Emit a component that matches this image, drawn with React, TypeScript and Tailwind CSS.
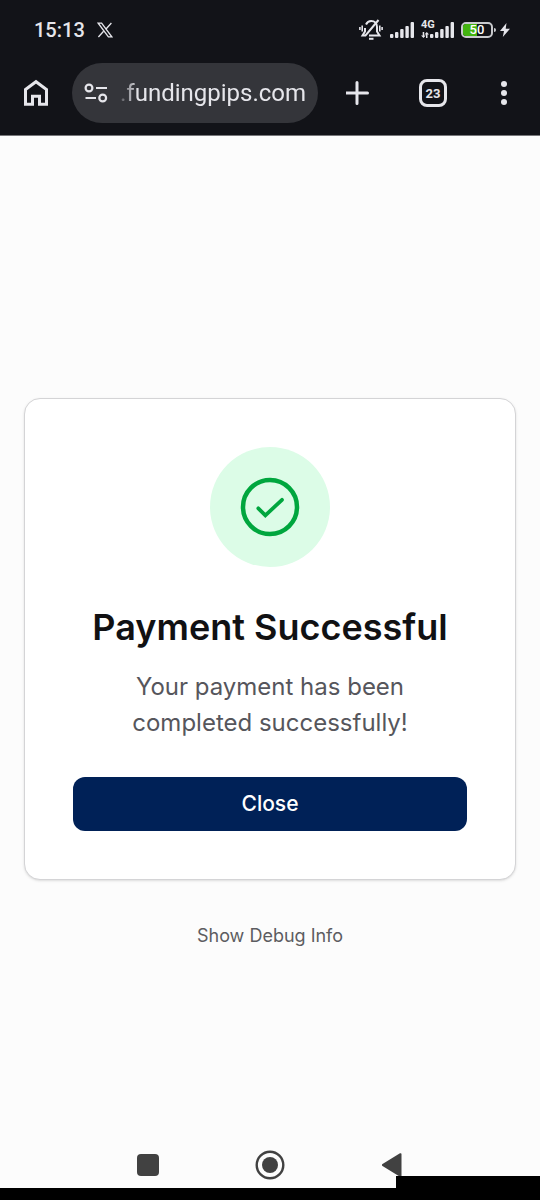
import React from 'react';

function StatusBar() {
  return (
    <div className="flex h-[59px] items-center justify-between pl-[34px] pr-[30px]">
      <div className="flex items-center gap-3">
        <span className="font-[Roboto,sans-serif] text-xl font-medium">15:13</span>
        <svg className="h-4 w-4" viewBox="0 0 16 16" fill="none" stroke="currentColor" strokeWidth="1.3">
          <path d="M1.2 1.2h3.4l10.2 13.6h-3.4z" />
          <path d="M14.4 1 8.8 7.2M6.6 9.2 1.4 15" />
        </svg>
      </div>

      <div className="flex items-center gap-[7px]">
        {/* Muted bell */}
        <svg className="h-6 w-6" viewBox="0 0 24 24" fill="none" stroke="currentColor" strokeWidth="2">
          <path d="M7 6.5C8.200 4 10 3 12.200 3c3.600 0 5.800 2.700 5.800 6v4.500l2.500 4H10" />
          <path d="M6 10v3.500L3.500 17.500h3L19.500 2" />
          <path d="M10 20.800h4.500" strokeWidth="2" />
          <path d="M3.200 7.500v6M.9 9v3M20.800 7.500v6M23.100 9v3" strokeWidth="1.6" />
        </svg>
        <svg className="h-4 w-6" viewBox="0 0 24 16" fill="currentColor">
          <rect x="0" y="12" width="3.400" height="4" rx="1" />
          <rect x="5" y="10" width="3.400" height="6" rx="1" />
          <rect x="10.200" y="7" width="3.400" height="9" rx="1" />
          <rect x="15.400" y="4" width="3.400" height="12" rx="1" />
          <rect x="20.600" y="0" width="3.400" height="16" rx="1" />
        </svg>
        <div className="relative h-5 w-[33px]">
          <span className="absolute left-0 top-0 font-[Roboto,sans-serif] text-[11px] font-bold leading-[10px]">4G</span>
          <svg className="h-5 w-full" viewBox="0 0 33 20" fill="currentColor">
            <path d="M1.700 12h1.500v3.500h1.500L2.500 18 0 15.500h1.700zM5 18h1.500v-3.500H8L5.800 12 3.500 14.500H5z" />
            <rect x="9" y="14" width="3.400" height="4" rx="1" />
            <rect x="14" y="12" width="3.400" height="6" rx="1" />
            <rect x="19.200" y="9" width="3.400" height="9" rx="1" />
            <rect x="24.400" y="6" width="3.400" height="12" rx="1" />
            <rect x="29.600" y="2" width="3.400" height="16" rx="1" />
          </svg>
        </div>
        <div className="flex items-center gap-1">
          <div className="flex items-center gap-px">
            <div className="relative flex h-4 w-8 items-center justify-center rounded-[5px] border-2 border-[#c9cacd]">
              <div className="absolute inset-y-0 left-0 w-1/2 rounded-l-[3px] bg-[#43b40f]" />
              <span className="relative font-[Roboto,sans-serif] text-[13px] font-medium leading-3 text-white">50</span>
            </div>
            <div className="h-1 w-0.5 rounded-r bg-[#c9cacd]" />
          </div>
          <svg className="h-4 w-[10px]" viewBox="0 0 10 16" fill="currentColor">
            <path d="M6.500 1 0 9h4L2.800 15 10 6.800H5.700z" />
          </svg>
        </div>
      </div>
    </div>
  );
}

function BrowserBar() {
  return (
    <div className="flex h-[68px] items-center pl-5 pr-6">
      <button type="button" aria-label="Home" className="flex h-8 w-8 shrink-0 items-center justify-center">
        <svg className="h-7 w-7" viewBox="0 0 28 28" fill="none" stroke="currentColor" strokeWidth="3">
          <path d="M3.500 10.500 14 2.700l10.500 7.800v14.800h-7v-8h-7v8h-7z" />
        </svg>
      </button>

      <div className="ml-5 flex h-[60px] min-w-0 flex-1 items-center rounded-full bg-[#34353a] px-3">
        <svg className="h-6 w-6 shrink-0" viewBox="0 0 24 24" fill="none" stroke="currentColor" strokeWidth="2.200">
          <circle cx="5" cy="7" r="3.400" />
          <path d="M12 7h11M1.500 17H12" />
          <circle cx="18.700" cy="17" r="3.400" />
        </svg>
        <input
          type="text"
          aria-label="Address"
          readOnly
          value=".fundingpips.com"
          className="ml-3 h-10 w-full min-w-0 bg-transparent font-[Roboto,sans-serif] text-2xl outline-none [mask-image:linear-gradient(to_right,rgba(0,0,0,0.2),black_18px)]"
        />
      </div>

      <div className="ml-6 flex w-[174px] shrink-0 items-center justify-between">
        <button type="button" aria-label="New tab" className="flex h-8 w-8 items-center justify-center">
          <svg className="h-6 w-6" viewBox="0 0 24 24" fill="none" stroke="currentColor" strokeWidth="3" strokeLinecap="round">
            <path d="M11 1.500v21M.5 12h21" />
          </svg>
        </button>
        <button
          type="button"
          aria-label="Open tabs"
          className="flex h-7 w-7 items-center justify-center rounded-lg border-3 border-current font-[Roboto,sans-serif] text-[13px] font-bold leading-none"
        >
          23
        </button>
        <button type="button" aria-label="Menu" className="flex h-8 w-6 items-center justify-center">
          <svg className="h-6 w-6" viewBox="0 0 24 24" fill="currentColor">
            <circle cx="12" cy="3" r="3" />
            <circle cx="12" cy="12" r="3" />
            <circle cx="12" cy="21" r="3" />
          </svg>
        </button>
      </div>
    </div>
  );
}

function PaymentCard() {
  return (
    <section className="rounded-2xl border border-[#d4d4d6] bg-white p-12 text-center shadow">
      <div className="mx-auto flex h-30 w-30 items-center justify-center rounded-full bg-[#dcfce7]">
        <svg className="h-18 w-18" viewBox="0 0 24 24" fill="none" stroke="#00a63e" strokeWidth="1.500" strokeLinecap="round" strokeLinejoin="round">
          <circle cx="12" cy="12" r="9" />
          <path d="m8.100 12.450 2.350 2.350L16 9.600" strokeWidth="1.250" strokeLinejoin="miter" />
        </svg>
      </div>
      <h1 className="mt-9 text-4xl font-semibold leading-[48px] text-[#111113]">Payment Successful</h1>
      <p className="mx-auto mt-[18px] max-w-[320px] text-2xl leading-9 text-[#56565c]">
        Your payment has been completed successfully!
      </p>
      <button type="button" className="mt-9 h-[54px] w-full rounded-xl bg-[#002157] text-[21px] font-medium text-white">
        Close
      </button>
    </section>
  );
}

function SystemNav() {
  return (
    <nav>
      <div className="flex h-[47px] items-center justify-center gap-[90px] text-[#414141]">
        <button type="button" aria-label="Recent apps" className="flex h-8 w-8 items-center justify-center">
          <svg className="h-[22px] w-[22px]" viewBox="0 0 22 22" fill="currentColor">
            <rect width="22" height="22" rx="4" />
          </svg>
        </button>
        <button type="button" aria-label="Home screen" className="flex h-8 w-8 items-center justify-center">
          <svg className="h-[30px] w-[30px]" viewBox="0 0 30 30">
            <circle cx="15" cy="15" r="13.300" fill="none" stroke="currentColor" strokeWidth="2.400" />
            <circle cx="15" cy="15" r="8" fill="currentColor" />
          </svg>
        </button>
        <button type="button" aria-label="Back" className="flex h-8 w-8 items-center justify-center">
          <svg className="h-6 w-5" viewBox="0 0 20 24" fill="currentColor">
            <path d="M18 .3.500 11q-1.300 1 0 2L18 23.700h1.500V1q0-1-1.500-.7z" />
          </svg>
        </button>
      </div>
      <div className="h-3 bg-black" />
    </nav>
  );
}

export default function App() {
  return (
    <div className="relative flex min-h-screen flex-col bg-[#fcfcfc] font-[Inter,sans-serif]">
      <header className="border-b border-[#77777a] bg-[#121318] pb-2 text-[#e6e6eb]">
        <StatusBar />
        <BrowserBar />
      </header>

      <main className="grid flex-1 grid-rows-[1fr_auto_1fr] px-6">
        <div />
        <PaymentCard />
        <div className="flex items-start justify-center pt-9">
          <button type="button" className="h-10 px-3 text-lg text-[#5c5c61]">
            Show Debug Info
          </button>
        </div>
      </main>

      <SystemNav />
      <div className="absolute bottom-0 right-0 h-6 w-36 bg-black" />
    </div>
  );
}
